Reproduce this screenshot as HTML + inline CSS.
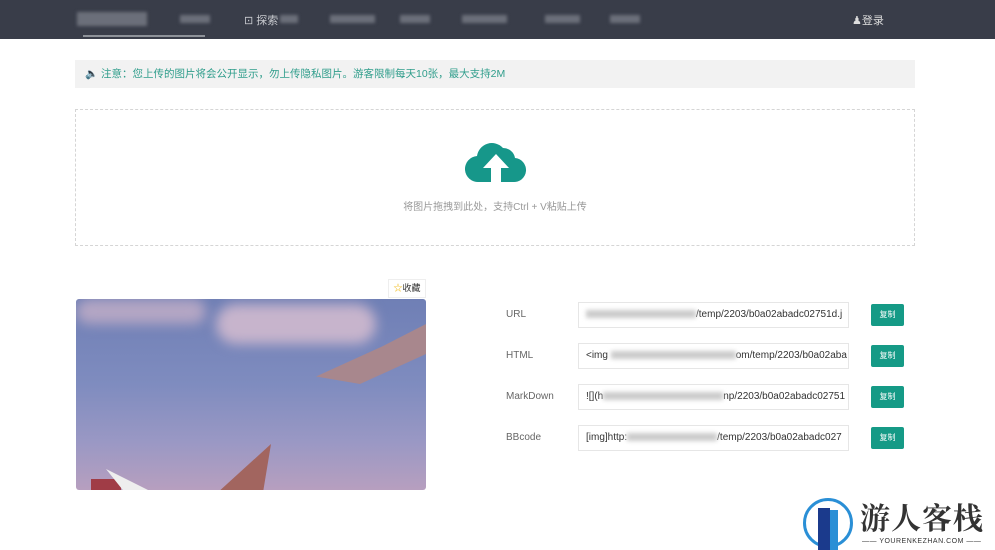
<!DOCTYPE html>
<html><head><meta charset="utf-8"><style>
*{margin:0;padding:0;box-sizing:border-box}
body{width:995px;height:550px;overflow:hidden;background:#fff;font-family:"Liberation Sans","Noto Sans CJK SC",sans-serif;position:relative}
.nav{position:absolute;left:0;top:0;width:995px;height:39px;background:#393d49}
.blur{position:absolute;background:#6b6f7a;filter:blur(1.5px);height:8px}
.nav .t{position:absolute;color:#c9cbd0;font-size:11px;top:12px}
.notice{position:absolute;left:75px;top:60px;width:840px;height:28px;background:#f2f2f2;color:#2f9d8b;font-size:10.5px;line-height:28px;padding-left:10px}
.up{position:absolute;left:75px;top:109px;width:840px;height:137px;border:1px dashed #d5d5d5}
.up .txt{position:absolute;top:88px;width:100%;text-align:center;color:#999;font-size:10px}
.img{position:absolute;left:76px;top:299px;width:350px;height:191px;border-radius:3px;overflow:hidden;background:linear-gradient(180deg,#6f7fb5 0%,#7f8cbf 45%,#9a98c4 75%,#b79fbf 100%)}
.star{position:absolute;left:388px;top:279px;width:38px;height:19px;border:1px solid #eee;font-size:9px;color:#333;line-height:17px;text-align:center}
.lab{position:absolute;left:506px;font-size:10px;color:#666}
.inp{position:absolute;left:578px;width:271px;height:26px;border:1px solid #e6e6e6;font-size:10px;color:#333;line-height:24px;padding-left:7px;white-space:nowrap;overflow:hidden}
.inp i{display:inline-block;height:8px;background:#ccc;filter:blur(2px);vertical-align:middle}
.btn{position:absolute;left:871px;width:33px;height:22px;background:#159a86;color:#fff;font-size:8px;text-align:center;line-height:22px;border-radius:2px}
</style></head><body>
<div class="nav">
 <div class="blur" style="left:77px;top:12px;width:70px;height:14px"></div>
 <div style="position:absolute;left:83px;top:35px;width:122px;height:2px;background:#8e9299"></div>
 <div class="blur" style="left:180px;top:15px;width:30px"></div>
 <div class="t" style="left:244px">⊡ 探索</div>
 <div class="blur" style="left:280px;top:15px;width:18px"></div>
 <div class="blur" style="left:330px;top:15px;width:45px"></div>
 <div class="blur" style="left:400px;top:15px;width:30px"></div>
 <div class="blur" style="left:462px;top:15px;width:45px"></div>
 <div class="blur" style="left:545px;top:15px;width:35px"></div>
 <div class="blur" style="left:610px;top:15px;width:30px"></div>
 <div class="t" style="left:852px;color:#ddd">♟登录</div>
</div>
<div class="notice">🔈 注意：您上传的图片将会公开显示，勿上传隐私图片。游客限制每天10张，最大支持2M</div>
<div class="up">
 <svg style="position:absolute;left:389px;top:30px" width="62" height="44" viewBox="0 0 62 44"><path d="M14 42 A13 13 0 0 1 12 16 A15 15 0 0 1 38 8 A12 12 0 0 1 50 18 A12 12 0 0 1 48 42 Z" fill="#16978a"/><path d="M31 14 L44 28 L36 28 L36 42 L26 42 L26 28 L18 28 Z" fill="#fff"/></svg>
 <div class="txt">将图片拖拽到此处，支持Ctrl + V粘贴上传</div>
</div>
<div class="star"><span style="color:#f0b400">☆</span>收藏</div>
<div class="img">
 <div style="position:absolute;left:140px;top:5px;width:160px;height:40px;background:#c7b4cc;border-radius:30px;filter:blur(6px)"></div>
 <div style="position:absolute;left:0;top:0;width:130px;height:25px;background:#b4a6c4;border-radius:20px;filter:blur(6px)"></div>
 <div style="position:absolute;left:240px;top:25px;width:110px;height:75px;background:#a8878d;clip-path:polygon(100% 0,100% 40%,40% 80%,0 70%,60% 30%);"></div>
 <div style="position:absolute;left:140px;top:145px;width:55px;height:50px;background:#a2655f;clip-path:polygon(100% 0,85% 100%,0 100%)"></div>
 <div style="position:absolute;left:15px;top:180px;width:30px;height:15px;background:#a03c46"></div>
 <div style="position:absolute;left:30px;top:170px;width:50px;height:25px;background:#eee;clip-path:polygon(0 0,100% 100%,40% 100%)"></div>
</div>
<div class="lab" style="top:309px">URL</div>
<div class="lab" style="top:350px">HTML</div>
<div class="lab" style="top:391px">MarkDown</div>
<div class="lab" style="top:432px">BBcode</div>
<div class="inp" style="top:302px"><i style="width:110px"></i>/temp/2203/b0a02abadc02751d.j</div>
<div class="inp" style="top:343px">&lt;img <i style="width:125px"></i>om/temp/2203/b0a02aba</div>
<div class="inp" style="top:384px">![](h<i style="width:120px"></i>np/2203/b0a02abadc02751</div>
<div class="inp" style="top:425px">[img]http:<i style="width:90px"></i>/temp/2203/b0a02abadc027</div>
<div class="btn" style="top:304px">复制</div>
<div class="btn" style="top:345px">复制</div>
<div class="btn" style="top:386px">复制</div>
<div class="btn" style="top:427px">复制</div>
<div style="position:absolute;left:803px;top:498px;width:50px;height:50px;border:3px solid #2a8fd6;border-radius:50%"></div>
<div style="position:absolute;left:818px;top:508px;width:12px;height:42px;background:#1b3a8c"></div>
<div style="position:absolute;left:830px;top:510px;width:8px;height:40px;background:#2a8fd6"></div>
<div style="position:absolute;left:860px;top:499px;font-size:30px;line-height:34px;font-weight:bold;color:#333;font-family:'Noto Serif CJK SC',serif;white-space:nowrap;letter-spacing:1px">游人客栈</div>
<div style="position:absolute;left:862px;top:538px;font-size:7px;color:#333;letter-spacing:0.5px;white-space:nowrap">—— YOURENKEZHAN.COM ——</div>
</body></html>
